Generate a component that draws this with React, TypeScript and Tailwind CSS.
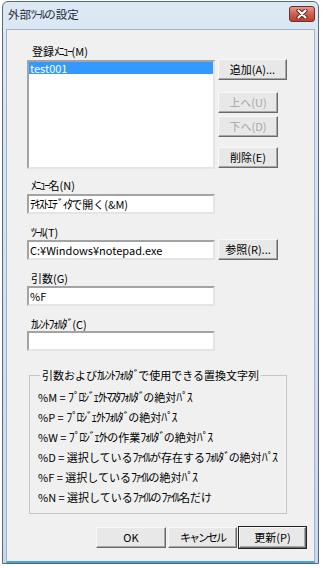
import type { ReactNode } from "react";

// half-width katakana runs: taller glyphs, tighter advance, like the original UI font
function K({ text }: { text: string }) {
  const parts = text.split(/([\uFF61-\uFF9F]+)/);
  return (
    <>
      {parts.map((p, i) =>
        /[\uFF61-\uFF9F]/.test(p) ? (
          <span key={i} className="text-[12px] tracking-[-1.6px]">
            {p}
          </span>
        ) : (
          <span key={i}>{p}</span>
        )
      )}
    </>
  );
}

function Btn({
  children,
  className = "",
  disabled = false,
  primary = false,
}: {
  children: ReactNode;
  className?: string;
  disabled?: boolean;
  primary?: boolean;
}) {
  return (
    <div
      className={`flex h-[21px] items-center justify-center border border-t-[#f8f8f8] border-l-[#f8f8f8] border-r-[#6a6a6a] border-b-[#6a6a6a] bg-[#e8e8e8] text-[11px] shadow-[inset_-1px_-1px_0_#a8a8a8] ${
        disabled ? "text-[#a6a6a6]" : "text-black"
      } ${primary ? "outline outline-1 outline-[#222]" : ""} ${className}`}
    >
      {children}
    </div>
  );
}

function Field({ value = "" }: { value?: string }) {
  return (
    <div className="h-[20px] w-[188px] border-2 border-t-[#a3a3a3] border-l-[#a3a3a3] border-r-[#e4e4e4] border-b-[#e4e4e4] bg-white px-[1px] text-[11px] leading-[16px]">
      <K text={value} />
    </div>
  );
}

function Label({ text, className = "" }: { text: string; className?: string }) {
  return (
    <div className={`h-[14px] pl-[4px] text-[11px] leading-[14px] ${className}`}>
      <K text={text} />
    </div>
  );
}

const vars = [
  "%M = ﾌﾟﾛｼﾞｪｸﾄﾏｽﾀﾌｫﾙﾀﾞの絶対ﾊﾟｽ",
  "%P = ﾌﾟﾛｼﾞｪｸﾄﾌｫﾙﾀﾞの絶対ﾊﾟｽ",
  "%W = ﾌﾟﾛｼﾞｪｸﾄの作業ﾌｫﾙﾀﾞの絶対ﾊﾟｽ",
  "%D = 選択しているﾌｧｲﾙが存在するﾌｫﾙﾀﾞの絶対ﾊﾟｽ",
  "%F = 選択しているﾌｧｲﾙの絶対ﾊﾟｽ",
  "%N = 選択しているﾌｧｲﾙのﾌｧｲﾙ名だけ",
];

export default function App() {
  return (
    <div className="h-[568px] w-[324px] bg-white pl-[2px] pt-[1px] font-['Noto_Sans_CJK_JP','Liberation_Sans',sans-serif] text-black">
      <div className="flex h-[563px] w-[317px] flex-col rounded-t-[6px] border border-[#56687e] bg-linear-to-b from-[#dde8f5] to-[#c8d8ec] px-[3px]">
        {/* title bar */}
        <div className="flex h-[27px] items-center justify-between pb-[3px] pl-[2px]">
          <span className="text-[11.5px] text-[#1e2a3a]">
            <K text="外部ﾂｰﾙの設定" />
          </span>
          <div className="flex h-[16px] w-[26px] items-center justify-center rounded-[3px] border border-[#6e3028] bg-linear-to-b from-[#e4988d] via-[#cf5f50] to-[#b9402f]">
            <svg width="12" height="10" viewBox="0 0 12 10">
              <path d="M2.5 1.5 L9.5 8.5 M9.5 1.5 L2.5 8.5" stroke="#5a2018" strokeWidth="4" strokeLinecap="round" />
              <path d="M2.5 1.5 L9.5 8.5 M9.5 1.5 L2.5 8.5" stroke="#ffffff" strokeWidth="2.2" strokeLinecap="round" />
            </svg>
          </div>
        </div>

        {/* body */}
        <div className="flex flex-1 flex-col border border-[#9fb3cc] border-b-2 border-b-[#44a3dc] bg-[#f0f0f0] pl-[20px] pt-[14px] text-[11px]">
          <Label className="pl-[5px]" text="登録ﾒﾆｭｰ(M)" />
          <div className="mt-[2px] flex gap-[3px]">
            <div className="h-[109px] w-[188px] border-2 border-t-[#a3a3a3] border-l-[#a3a3a3] border-r-[#e4e4e4] border-b-[#e4e4e4] bg-white">
              <div className="h-[12px] bg-[#3399ff] pl-[1px] text-[11px] leading-[12px] text-white">test001</div>
            </div>
            <div className="-mt-[1px] flex flex-col">
              <Btn className="w-[69px]">追加(A)...</Btn>
              <Btn className="mt-[12px] w-[60px]" disabled>
                上へ(U)
              </Btn>
              <Btn className="mt-[3px] w-[60px]" disabled>
                下へ(D)
              </Btn>
              <Btn className="mt-[10px] w-[60px]">削除(E)</Btn>
            </div>
          </div>

          <Label className="mt-[9px]" text="ﾒﾆｭｰ名(N)" />
          <div className="mt-[2px]">
            <Field value="ﾃｷｽﾄｴﾃﾞｨﾀで開く(&M)" />
          </div>

          <Label className="mt-[11px]" text="ﾂｰﾙ(T)" />
          <div className="mt-[1px] flex items-start gap-[3px]">
            <Field value="C:¥Windows¥notepad.exe" />
            <Btn className="-mt-[1px] w-[60px]">参照(R)...</Btn>
          </div>

          <Label className="mt-[11px]" text="引数(G)" />
          <div className="mt-[1px]">
            <Field value="%F" />
          </div>

          <Label className="mt-[11px]" text="ｶﾚﾝﾄﾌｫﾙﾀﾞ(C)" />
          <div className="mt-[0px]">
            <Field />
          </div>

          <fieldset className="ml-[2px] mt-[17px] w-[258px] border border-[#c5c5c5] pb-[6px] pl-[8px]">
            <legend className="ml-[2px] px-[2px] text-[11px] leading-[14px]">
              <K text="引数およびｶﾚﾝﾄﾌｫﾙﾀﾞで使用できる置換文字列" />
            </legend>
            <div className="whitespace-nowrap pt-[5px] text-[11px] leading-[20px]">
              {vars.map((v) => (
                <div key={v}>
                  <K text={v} />
                </div>
              ))}
            </div>
          </fieldset>

          <div className="mt-[13px] flex justify-end gap-[2px] pr-[8px]">
            <Btn className="w-[70px]">OK</Btn>
            <Btn className="w-[69px] tracking-[-2px]">キャンセル</Btn>
            <Btn className="w-[67px]" primary>
              更新(P)
            </Btn>
          </div>
        </div>
      </div>
    </div>
  );
}
